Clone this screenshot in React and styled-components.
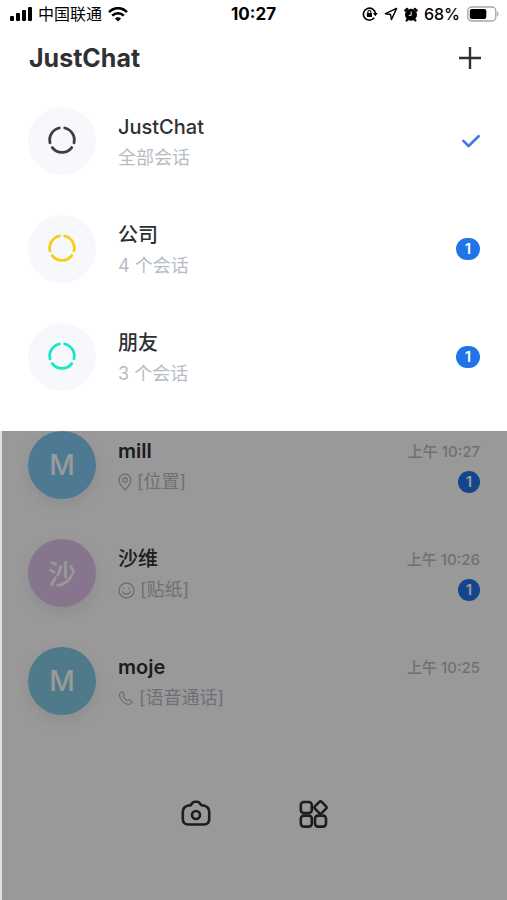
import styled, { createGlobalStyle } from "styled-components";

const GlobalStyle = createGlobalStyle`
    * {
        box-sizing: border-box;
    }

    body {
        margin: 0;
        background-color: #FFFFFF;
        color: #303133;
        font-family: Inter, "Noto Sans CJK SC", sans-serif;
    }

    button {
        border: 0;
        padding: 0;
        background: none;
        color: inherit;
        font: inherit;
        text-align: left;
        cursor: pointer;
    }
`

const Page = styled.div`
    display: flex;
    flex-direction: column;
    min-height: 100vh;
`

const StatusBar = styled.div`
    display: grid;
    grid-template-columns: 1fr auto 1fr;
    align-items: center;
    height: 28px;
    padding: 0 8px;
    color: #000000;
    font-size: 16px;
    font-weight: 500;
`

const StatusGroup = styled.div`
    display: flex;
    align-items: center;
    justify-content: ${({ $end }) => ($end ? "flex-end" : "flex-start")};
    gap: 6px;
`

const Carrier = styled.span`
    font-weight: 400;
    line-height: 20px;
`

const StatusTime = styled.span`
    font-size: 17px;
    font-weight: 700;
`

const Header = styled.header`
    display: flex;
    align-items: center;
    justify-content: space-between;
    height: 59px;
    padding: 0 26px 0 29px;
`

const Title = styled.h1`
    margin: 0;
    font-size: 25px;
    font-weight: 700;
`

const IconButton = styled.button`
    display: flex;
    color: #303133;
`

const List = styled.ul`
    list-style: none;
    margin: 0;
    padding: 0 0 ${({ $bottom }) => $bottom || 0}px;
`

const WorkspaceRow = styled.button`
    display: flex;
    align-items: center;
    gap: 22px;
    width: 100%;
    height: 108px;
    padding: 0 27px 0 28px;
`

const ChatRow = styled(WorkspaceRow)`
    height: 68px;
    margin-bottom: 40px;
`

const Avatar = styled.span`
    display: flex;
    align-items: center;
    justify-content: center;
    flex-shrink: 0;
    width: 68px;
    height: 68px;
    border-radius: 50%;
    background-color: #F6F8FC;
    color: ${({ $color }) => $color};
`

const ChatAvatar = styled(Avatar)`
    background-color: ${({ $color }) => $color};
    box-shadow: 0 6px 14px rgba(60, 70, 90, 0.1);
    color: #FFFFFF;
    font-size: 28px;
    font-weight: 500;
`

const Info = styled.span`
    display: flex;
    flex: 1;
    flex-direction: column;
    gap: 1px;
    min-width: 0;
    padding-top: 3px;
`

const Name = styled.span`
    font-size: 20px;
    font-weight: ${({ $bold }) => ($bold ? 600 : 500)};
    line-height: 30px;
`

const Detail = styled.span`
    display: flex;
    align-items: center;
    gap: 5px;
    color: #B6BCC4;
    font-size: 18px;
    line-height: 30px;
`

const Meta = styled.span`
    display: flex;
    flex-direction: column;
    align-items: flex-end;
    align-self: stretch;
    gap: 4px;
    padding-top: 6px;
`

const Time = styled.span`
    color: #B6BCC4;
    font-size: 15px;
    font-weight: 500;
    line-height: 30px;
`

const Badge = styled.span`
    width: ${({ $wide }) => ($wide ? 24 : 22)}px;
    height: 22px;
    border-radius: 11px;
    background-color: #1F74E8;
    color: #FFFFFF;
    font-size: 15px;
    font-weight: 600;
    line-height: 22px;
    text-align: center;
`

const Backdrop = styled.main`
    position: relative;
    flex: 1;
    border-left: 2px solid #E0E0E0;
    padding-bottom: 20px;

    ${ChatRow} {
        padding-left: 26px;
    }

    &::after {
        content: "";
        position: absolute;
        inset: 0;
        background-color: rgba(0, 0, 0, 0.4);
        pointer-events: none;
    }
`

const Toolbar = styled.nav`
    display: flex;
    justify-content: center;
    gap: 86px;
    padding-top: 43px;
`

const SignalIcon = () => (
    <svg width="24" height="16" viewBox="0 0 24 16" fill="currentColor">
        <rect x="2" y="10" width="4" height="5" rx="1" />
        <rect x="8" y="7" width="4" height="8" rx="1" />
        <rect x="14" y="4" width="4" height="11" rx="1" />
        <rect x="20" y="1" width="4" height="14" rx="1" />
    </svg>
)

const WifiIcon = () => (
    <svg width="20" height="15" viewBox="0 0 20 15" fill="none" stroke="currentColor" strokeWidth="2.5">
        <path d="M1 5.2C6-.2 14-.2 19 5.2M4.2 8.7c3.3-3.4 8.3-3.4 11.6 0" />
        <path d="M10 14.6 6.9 11.5c1.8-1.7 4.4-1.7 6.2 0Z" fill="currentColor" stroke="none" />
    </svg>
)

const LockIcon = () => (
    <svg width="16" height="16" viewBox="0 0 16 16" fill="none" stroke="currentColor" strokeWidth="1.6">
        <path d="M12.2 11.8A6 6 0 1 1 13.4 8" />
        <path d="m10.9 7 4.8 0-2.3 3.2Z" fill="currentColor" stroke="none" />
        <rect x="4.8" y="7" width="5.2" height="4" rx=".5" fill="currentColor" stroke="none" />
        <path d="M5.9 7V6a1.5 1.5 0 0 1 3 0v1" strokeWidth="1.1" />
    </svg>
)

const LocationArrowIcon = () => (
    <svg width="14" height="14" viewBox="0 0 14 14" fill="none" stroke="currentColor" strokeWidth="1.4" strokeLinejoin="round">
        <path d="M12.6 1.4 1.4 6.7l5.2.8.8 5.1Z" />
    </svg>
)

const AlarmIcon = () => (
    <svg width="14" height="15" viewBox="0 0 14 15">
        <circle cx="7" cy="7.8" r="6" fill="currentColor" />
        <path d="m1.200 3.600 2-1.800M12.800 3.600l-2-1.800M2.6 13.500l1.200-1.200M11.4 13.500l-1.200-1.200" stroke="currentColor" strokeWidth="2.2" strokeLinecap="round" />
        <path d="M7.2 4.6v3.700H4.8" fill="none" stroke="#FFFFFF" strokeWidth="1" />
    </svg>
)

const BatteryIcon = () => (
    <svg width="33" height="16" viewBox="0 0 33 16">
        <rect x="1.800" y="1" width="28" height="14" rx="4" fill="none" stroke="#A6A6A6" strokeWidth="1.4" />
        <rect x="3.800" y="3" width="16.500" height="10" rx="2" fill="currentColor" />
        <path d="M31.200 5.6c1.8.8 1.8 4 0 4.8Z" fill="#A6A6A6" />
    </svg>
)

const PlusIcon = () => (
    <svg width="22" height="22" viewBox="0 0 22 22" stroke="currentColor" strokeWidth="2.4">
        <path d="M11 0v22M0 11h22" />
    </svg>
)

const CheckIcon = () => (
    <svg width="18" height="14" viewBox="0 0 18 14" fill="none" stroke="#3F7BE8" strokeWidth="2.6" strokeLinecap="round" strokeLinejoin="round">
        <path d="m1.4 6.8 5.2 5.2L16.6 2.200" />
    </svg>
)

const RingIcon = () => (
    <svg width="32" height="32" viewBox="-16 -15 32 32" fill="none" stroke="currentColor" strokeWidth="2.8" strokeLinecap="round">
        <path d="M2.7-12A12.3 12.3 0 0 1 12 2.9M9.7 7.6A12.3 12.3 0 0 1-9.7 7.6M-12 2.9A12.3 12.3 0 0 1-2.7-12" />
    </svg>
)

const PinIcon = () => (
    <svg width="14" height="18" viewBox="0 0 14 18" fill="none" stroke="currentColor" strokeWidth="1.4">
        <path d="M7 17C3 13 1 10.2 1 7a6 6 0 0 1 12 0c0 3.2-2 6-6 10Z" strokeLinejoin="round" />
        <circle cx="7" cy="7" r="2.2" />
    </svg>
)

const SmileIcon = () => (
    <svg width="17" height="17" viewBox="0 0 17 17" fill="none" stroke="currentColor" strokeWidth="1.4" strokeLinecap="round">
        <circle cx="8.5" cy="8.5" r="7.5" />
        <path d="M4.8 9.6c.8 3.4 6.6 3.4 7.4 0M5.7 6.2v.4M11.3 6.2v.4" />
    </svg>
)

const PhoneIcon = () => (
    <svg width="16" height="16" viewBox="0 0 16 16" fill="none" stroke="currentColor" strokeWidth="1.3" strokeLinejoin="round">
        <path d="M1.8 3.6 3.5 1.9c.5-.4 1-.3 1.3.2l1.3 2c.3.5.2.9-.2 1.3l-.8.9c.8 2 2.2 3.5 4.3 4.4l.9-.8c.4-.4.9-.4 1.3-.1l2 1.3c.5.3.6.9.2 1.3l-1.3 1.4c-.6.6-1.4.7-2.3.5C5.8 13.2 2.7 10.1 1.5 5.8c-.2-.9-.2-1.6.3-2.2Z" />
    </svg>
)

const CameraIcon = () => (
    <svg width="32" height="32" viewBox="0 0 32 32" fill="none" stroke="currentColor" strokeWidth="2.6" strokeLinejoin="round">
        <path d="M8 7.5h1.5c1 0 1.600-.6 2.100-1.500.8-1.400 1.600-2.200 3-2.200h2.800c1.400 0 2.200.8 3 2.200.5.9 1.100 1.500 2.100 1.500H24c3.400 1 5.200 3.400 5.200 6.500v7c0 3.500-2 5.500-5.500 5.500H8.300C4.800 26.500 2.800 24.500 2.800 21v-7c0-3.100 1.800-5.500 5.200-6.500Z" />
        <circle cx="16" cy="17" r="4" />
    </svg>
)

const AppsIcon = () => (
    <svg width="32" height="32" viewBox="0 0 32 32" fill="none" stroke="currentColor" strokeWidth="2.6">
        <rect x="2.8" y="4" width="11" height="11" rx="3" />
        <rect x="2.8" y="17.6" width="11" height="11" rx="3" />
        <rect x="17" y="17.6" width="11" height="11" rx="3" />
        <rect x="17.7" y="4.7" width="9.6" height="9.6" rx="2" transform="rotate(45 22.5 9.5)" />
    </svg>
)

const workspaces = [
    { name: "JustChat", detail: "全部会话", color: "#3C3E42", selected: true },
    { name: "公司", detail: "4 个会话", color: "#FACB14", unread: 1 },
    { name: "朋友", detail: "3 个会话", color: "#14E8C4", unread: 1 },
]

const chats = [
    { name: "mill", bold: true, initial: "M", color: "#81CAF6", icon: PinIcon, detail: "[位置]", time: "上午 10:27", unread: 1 },
    { name: "沙维", initial: "沙", color: "#E0C4EC", icon: SmileIcon, detail: "[贴纸]", time: "上午 10:26", unread: 1 },
    { name: "moje", bold: true, initial: "M", color: "#82CCE4", icon: PhoneIcon, detail: "[语音通话]", time: "上午 10:25" },
]

export default function App() {
    return (
        <Page>
            <GlobalStyle />
            <StatusBar>
                <StatusGroup>
                    <SignalIcon />
                    <Carrier>中国联通</Carrier>
                    <WifiIcon />
                </StatusGroup>
                <StatusTime>10:27</StatusTime>
                <StatusGroup $end>
                    <LockIcon />
                    <LocationArrowIcon />
                    <AlarmIcon />
                    <span>68%</span>
                    <BatteryIcon />
                </StatusGroup>
            </StatusBar>
            <Header>
                <Title>JustChat</Title>
                <IconButton aria-label="添加">
                    <PlusIcon />
                </IconButton>
            </Header>
            <List $bottom={20}>
                {workspaces.map(({ name, detail, color, selected, unread }) => (
                    <li key={name}>
                        <WorkspaceRow>
                            <Avatar $color={color}>
                                <RingIcon />
                            </Avatar>
                            <Info>
                                <Name>{name}</Name>
                                <Detail>{detail}</Detail>
                            </Info>
                            {selected && <CheckIcon />}
                            {unread && <Badge $wide>{unread}</Badge>}
                        </WorkspaceRow>
                    </li>
                ))}
            </List>
            <Backdrop>
                <List>
                    {chats.map(({ name, bold, initial, color, icon: Icon, detail, time, unread }) => (
                        <li key={name}>
                            <ChatRow>
                                <ChatAvatar $color={color}>{initial}</ChatAvatar>
                                <Info>
                                    <Name $bold={bold}>{name}</Name>
                                    <Detail>
                                        <Icon />
                                        {detail}
                                    </Detail>
                                </Info>
                                <Meta>
                                    <Time>{time}</Time>
                                    {unread && <Badge>{unread}</Badge>}
                                </Meta>
                            </ChatRow>
                        </li>
                    ))}
                </List>
                <Toolbar>
                    <IconButton aria-label="相机">
                        <CameraIcon />
                    </IconButton>
                    <IconButton aria-label="应用">
                        <AppsIcon />
                    </IconButton>
                </Toolbar>
            </Backdrop>
        </Page>
    )
}
